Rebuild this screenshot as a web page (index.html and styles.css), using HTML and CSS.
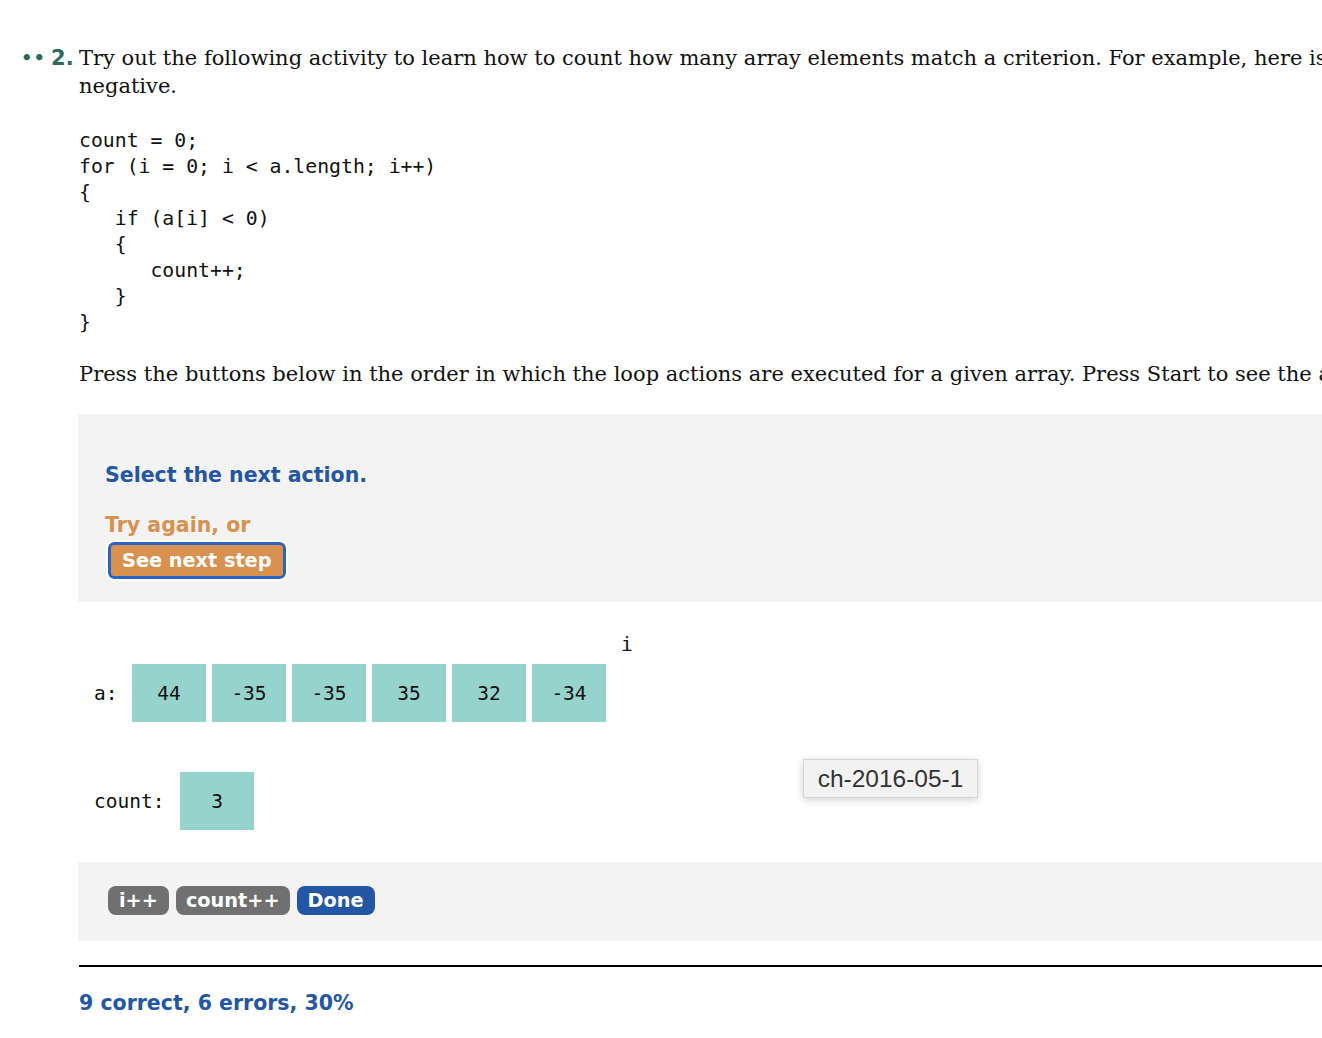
FILE: index.html
```html
<!DOCTYPE html>
<html>
<head>
<meta charset="utf-8">
<link rel="stylesheet" href="styles.css">
</head>
<body>
<div class="page">
  <div class="problem">
    <div class="marker"><span class="dots">••</span><span class="num">2.</span></div>
    <div class="content">
      <p class="intro"><span class="line">Try out the following activity to learn how to count how many array elements match a criterion. For example, here is how to count the elements that are</span><br>negative.</p>
      <pre class="code">count = 0;
for (i = 0; i &lt; a.length; i++)
{
   if (a[i] &lt; 0)
   {
      count++;
   }
}</pre>
      <p class="instr">Press the buttons below in the order in which the loop actions are executed for a given array. Press Start to see the array.</p>
      <div class="widget">
        <div class="feedback">
          <div class="select">Select the next action.</div>
          <div class="again">Try again, or</div>
          <button class="next">See next step</button>
        </div>
        <div class="vars">
          <div class="index-row">i</div>
          <div class="array-row">
            <span class="label">a:</span>
            <div class="cells">
              <div class="cell">44</div>
              <div class="cell">-35</div>
              <div class="cell">-35</div>
              <div class="cell">35</div>
              <div class="cell">32</div>
              <div class="cell">-34</div>
            </div>
          </div>
          <div class="count-row">
            <span class="label">count:</span>
            <div class="cell">3</div>
          </div>
          <div class="tooltip">ch-2016-05-1</div>
        </div>
        <div class="actions">
          <button class="act gray">i++</button>
          <button class="act gray">count++</button>
          <button class="act blue">Done</button>
        </div>
        <hr class="rule">
        <div class="score">9 correct, 6 errors, 30%</div>
      </div>
    </div>
  </div>
</div>
</body>
</html>
```
FILE: styles.css
```css
html { overflow: hidden; }
body { margin: 0; background: #fff; color: #111; }
.page { width: 1800px; }
.problem { display: flex; padding-left: 21px; padding-top: 44px; }
.marker { width: 58px; font-family: "DejaVu Sans", sans-serif; font-weight: bold; color: #2c6b5e; font-size: 21px; line-height: 28px; display: flex; gap: 5px; }
.dots { font-size: 18px; letter-spacing: 1px; }
.content { flex: 1; font-family: "DejaVu Serif", "Liberation Serif", serif; color: #111; }
.intro { margin: 0; font-size: 21px; line-height: 28px; }
.intro .line { white-space: nowrap; }
.code { margin: 28px 0 0; font-family: "DejaVu Sans Mono", monospace; font-size: 19.8px; line-height: 26px; }
.instr { margin: 24px 0 0; font-size: 21px; line-height: 28px; white-space: nowrap; }
.widget { margin-top: 26px; margin-left: -1px; width: 1500px; font-family: "DejaVu Sans", sans-serif; }
.feedback { background: #f3f3f3; padding: 49px 27px 23px; font-weight: bold; font-size: 20.5px; line-height: 24px; }
.select { color: #2356a5; }
.again { color: #d8914f; margin-top: 26px; }
.next { margin-top: 5px; margin-left: 3px; font-family: "DejaVu Sans", sans-serif; font-weight: bold; font-size: 19.3px; color: #fff; background: #d8914f; border: 3px solid #2a62c8; border-radius: 6px; outline: 2px solid #fff; height: 37px; padding: 0 11px; line-height: 28px; }
.vars { position: relative; padding: 31px 0 32px 16px; font-family: "DejaVu Sans Mono", monospace; font-size: 19.5px; }
.index-row { padding-left: 527px; line-height: 24px; height: 24px; }
.array-row { display: flex; align-items: center; margin-top: 7px; }
.array-row .label { width: 38px; }
.cells { display: flex; gap: 6px; }
.cell { width: 74px; height: 58px; background: #96d3cd; display: flex; align-items: center; justify-content: center; }
.count-row { display: flex; align-items: center; margin-top: 50px; }
.count-row .label { width: 86px; }
.tooltip { position: absolute; left: 725px; top: 157px; width: 175px; height: 39px; box-sizing: border-box; background: #f2f2f2; border: 1px solid #d6d6d6; box-shadow: 0 2px 8px rgba(0,0,0,0.18); font-family: "Liberation Sans", Arial, sans-serif; font-size: 24.5px; color: #333; display: flex; align-items: center; justify-content: center; }
.actions { background: #f3f3f3; padding: 24px 30px 26px; display: flex; gap: 7px; }
.act { font-family: "DejaVu Sans", sans-serif; font-weight: bold; font-size: 19.3px; color: #fff; border: none; border-radius: 8px; height: 29px; padding: 0 11px; line-height: 29px; }
.act.gray + .act.gray { padding: 0 10px; }
.gray { background: #707070; }
.blue { background: #2356a5; }
.rule { margin: 24px 0 0 1px; border: none; border-top: 2px solid #000; height: 0; }
.score { margin-top: 24px; margin-left: 1px; color: #2356a5; font-weight: bold; font-size: 20.5px; line-height: 24px; }
```
